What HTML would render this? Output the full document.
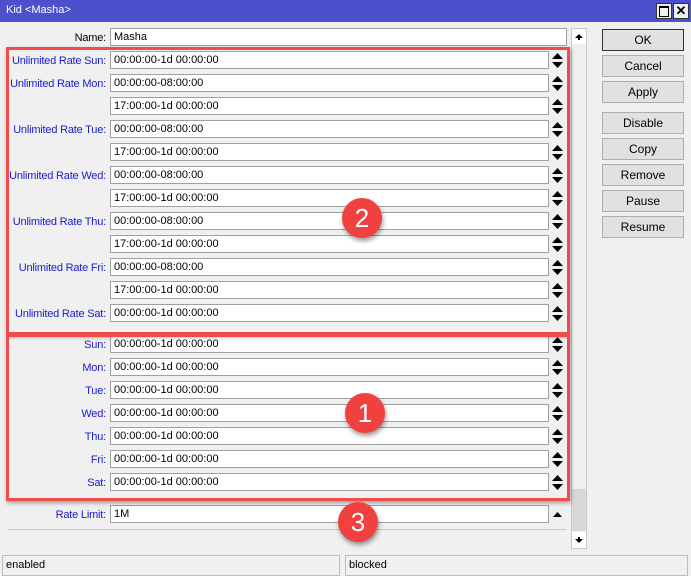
<!DOCTYPE html><html><head><style>
body{margin:0;width:691px;height:576px;background:#f0f0f0;font-family:"Liberation Sans",sans-serif;font-size:11px;position:relative;overflow:hidden}
.a{position:absolute}
.t{top:0;left:0;width:691px;height:22px;background:#4d50cd;color:#fff}
.lb{position:absolute;right:585px;color:#1a1ad0;text-align:right;white-space:nowrap;letter-spacing:-0.2px}
.f{position:absolute;left:110px;width:434px;height:16px;background:#fff;border:1px solid #a0a0a0;line-height:16px;padding-left:3px;color:#000;box-sizing:content-box}
.b{position:absolute;left:602px;width:80px;height:20px;border:1px solid #adadad;background:#e1e1e1;text-align:center;line-height:20px;font-size:12px}
.red{position:absolute;border:3px solid #f24b4b;box-shadow:1px 2px 4px rgba(0,0,0,.35)}
.c{position:absolute;width:40px;height:40px;border-radius:50%;background:#f0403f;color:#fff;font-size:26px;text-align:center;line-height:40px;box-shadow:1px 3px 5px rgba(0,0,0,.4)}
</style></head><body>
<div class="a t"><span class="a" style="left:6px;top:4px">Kid &lt;Masha&gt;</span>
<div class="a" style="left:656px;top:3px;width:14px;height:14px;background:#f0f0f0;border:1px solid #333"><div class="a" style="left:2px;top:2px;width:8px;height:8px;border:1px solid #000;border-top-width:2px"></div></div>
<div class="a" style="left:673px;top:3px;width:14px;height:14px;background:#f0f0f0;border:1px solid #333;color:#000;font-size:13px;font-weight:bold;line-height:14px;text-align:center">✕</div></div>

<div class="lb" style="top:32px;color:#000">Name:</div><div class="f" style="top:28px;width:452px">Masha</div>

<div class="lb" style="top:55px">Unlimited Rate Sun:</div><div class="f" style="top:51px">00:00:00-1d 00:00:00</div>
<div class="lb" style="top:78px">Unlimited Rate Mon:</div><div class="f" style="top:74px">00:00:00-08:00:00</div>
<div class="f" style="top:97px">17:00:00-1d 00:00:00</div>
<div class="lb" style="top:124px">Unlimited Rate Tue:</div><div class="f" style="top:120px">00:00:00-08:00:00</div>
<div class="f" style="top:143px">17:00:00-1d 00:00:00</div>
<div class="lb" style="top:170px">Unlimited Rate Wed:</div><div class="f" style="top:166px">00:00:00-08:00:00</div>
<div class="f" style="top:189px">17:00:00-1d 00:00:00</div>
<div class="lb" style="top:216px">Unlimited Rate Thu:</div><div class="f" style="top:212px">00:00:00-08:00:00</div>
<div class="f" style="top:235px">17:00:00-1d 00:00:00</div>
<div class="lb" style="top:262px">Unlimited Rate Fri:</div><div class="f" style="top:258px">00:00:00-08:00:00</div>
<div class="f" style="top:281px">17:00:00-1d 00:00:00</div>
<div class="lb" style="top:308px">Unlimited Rate Sat:</div><div class="f" style="top:304px">00:00:00-1d 00:00:00</div>

<div class="lb" style="top:339px">Sun:</div><div class="f" style="top:335px">00:00:00-1d 00:00:00</div>
<div class="lb" style="top:362px">Mon:</div><div class="f" style="top:358px">00:00:00-1d 00:00:00</div>
<div class="lb" style="top:385px">Tue:</div><div class="f" style="top:381px">00:00:00-1d 00:00:00</div>
<div class="lb" style="top:408px">Wed:</div><div class="f" style="top:404px">00:00:00-1d 00:00:00</div>
<div class="lb" style="top:431px">Thu:</div><div class="f" style="top:427px">00:00:00-1d 00:00:00</div>
<div class="lb" style="top:454px">Fri:</div><div class="f" style="top:450px">00:00:00-1d 00:00:00</div>
<div class="lb" style="top:477px">Sat:</div><div class="f" style="top:473px">00:00:00-1d 00:00:00</div>
<div class="lb" style="top:509px">Rate Limit:</div><div class="f" style="top:505px">1M</div>
<div class="a" style="left:8px;top:529px;width:558px;height:1px;background:#c8c8c8"></div>

<svg class="a" style="left:551px;top:0" width="14" height="520">
<g fill="#000">
<path d="M1 59h11l-5.5-6zM1 62h11l-5.5 6z"/><path d="M1 82h11l-5.5-6zM1 85h11l-5.5 6z"/><path d="M1 105h11l-5.5-6zM1 108h11l-5.5 6z"/>
<path d="M1 128h11l-5.5-6zM1 131h11l-5.5 6z"/><path d="M1 151h11l-5.5-6zM1 154h11l-5.5 6z"/><path d="M1 174h11l-5.5-6zM1 177h11l-5.5 6z"/>
<path d="M1 197h11l-5.5-6zM1 200h11l-5.5 6z"/><path d="M1 220h11l-5.5-6zM1 223h11l-5.5 6z"/><path d="M1 243h11l-5.5-6zM1 246h11l-5.5 6z"/>
<path d="M1 266h11l-5.5-6zM1 269h11l-5.5 6z"/><path d="M1 289h11l-5.5-6zM1 292h11l-5.5 6z"/><path d="M1 312h11l-5.5-6zM1 315h11l-5.5 6z"/>
<path d="M1 343h11l-5.5-6zM1 346h11l-5.5 6z"/><path d="M1 366h11l-5.5-6zM1 369h11l-5.5 6z"/><path d="M1 389h11l-5.5-6zM1 392h11l-5.5 6z"/>
<path d="M1 412h11l-5.5-6zM1 415h11l-5.5 6z"/><path d="M1 435h11l-5.5-6zM1 438h11l-5.5 6z"/><path d="M1 458h11l-5.5-6zM1 461h11l-5.5 6z"/>
<path d="M1 481h11l-5.5-6zM1 484h11l-5.5 6z"/><path d="M2 517h9l-4.5-5z"/>
</g></svg>

<div class="a" style="left:571px;top:28px;width:14px;height:519px;background:#f0f0f0;border:1px solid #c8c8c8">
<div class="a" style="left:0;top:0;width:14px;height:15px;background:#fff"></div>
<svg class="a" style="left:2px;top:3px" width="10" height="9"><path d="M1 6h8L5 2z M4 6h2v2h-2z"/></svg>
<div class="a" style="left:0;top:460px;width:14px;height:42px;background:#d8d8d8"></div>
<div class="a" style="left:0;top:503px;width:14px;height:16px;background:#fff"></div>
<svg class="a" style="left:2px;top:507px" width="10" height="9"><path d="M1 3h8L5 7z M4 1h2v2h-2z"/></svg>
</div>

<div class="b" style="top:29px;border-color:#333">OK</div>
<div class="b" style="top:55px">Cancel</div>
<div class="b" style="top:81px">Apply</div>
<div class="b" style="top:112px">Disable</div>
<div class="b" style="top:138px">Copy</div>
<div class="b" style="top:164px">Remove</div>
<div class="b" style="top:190px">Pause</div>
<div class="b" style="top:216px">Resume</div>

<div class="red" style="left:6px;top:47px;width:558px;height:282px"></div>
<div class="red" style="left:6px;top:334px;width:558px;height:161px"></div>
<div class="c" style="left:342px;top:198px">2</div>
<div class="c" style="left:345px;top:393px">1</div>
<div class="c" style="left:338px;top:502px">3</div>

<div class="a" style="left:2px;top:555px;width:338px;height:21px;border:1px solid #bdbdbd;line-height:19px;padding-left:3px;box-sizing:border-box">enabled</div>
<div class="a" style="left:345px;top:555px;width:343px;height:21px;border:1px solid #bdbdbd;line-height:19px;padding-left:3px;box-sizing:border-box">blocked</div>
</body></html>
